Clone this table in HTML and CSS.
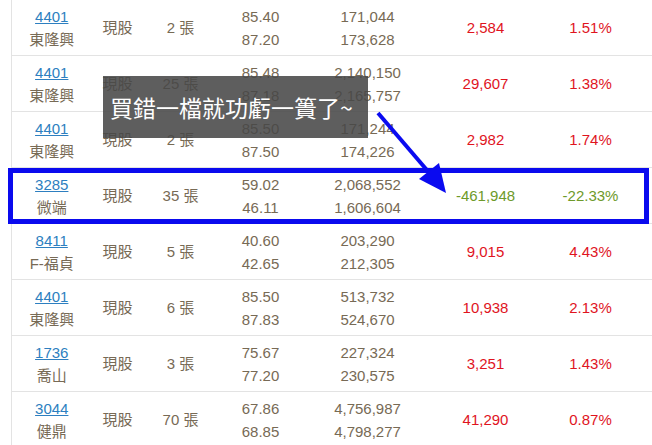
FILE: index.html
```html
<!DOCTYPE html>
<html lang="zh-Hant">
<head>
<meta charset="utf-8">
<link rel="stylesheet" href="styles.css">
</head>
<body>
<div class="page">
<table class="trades">
<colgroup>
<col class="c1"><col class="c2"><col class="c3"><col class="c4"><col class="c5"><col class="c6"><col class="c7"><col>
</colgroup>
<tbody>
<tr><td><a href="#">4401</a><br>東隆興</td><td>現股</td><td>2 張</td><td>85.40<br>87.20</td><td>171,044<br>173,628</td><td class="up">2,584</td><td class="up">1.51%</td><td></td></tr>
<tr><td><a href="#">4401</a><br>東隆興</td><td>現股</td><td>25 張</td><td>85.48<br>87.18</td><td>2,140,150<br>2,165,757</td><td class="up">29,607</td><td class="up">1.38%</td><td></td></tr>
<tr><td><a href="#">4401</a><br>東隆興</td><td>現股</td><td>2 張</td><td>85.50<br>87.50</td><td>171,244<br>174,226</td><td class="up">2,982</td><td class="up">1.74%</td><td></td></tr>
<tr><td><a href="#">3285</a><br>微端</td><td>現股</td><td>35 張</td><td>59.02<br>46.11</td><td>2,068,552<br>1,606,604</td><td class="down">-461,948</td><td class="down">-22.33%</td><td></td></tr>
<tr><td><a href="#">8411</a><br>F-福貞</td><td>現股</td><td>5 張</td><td>40.60<br>42.65</td><td>203,290<br>212,305</td><td class="up">9,015</td><td class="up">4.43%</td><td></td></tr>
<tr><td><a href="#">4401</a><br>東隆興</td><td>現股</td><td>6 張</td><td>85.50<br>87.83</td><td>513,732<br>524,670</td><td class="up">10,938</td><td class="up">2.13%</td><td></td></tr>
<tr><td><a href="#">1736</a><br>喬山</td><td>現股</td><td>3 張</td><td>75.67<br>77.20</td><td>227,324<br>230,575</td><td class="up">3,251</td><td class="up">1.43%</td><td></td></tr>
<tr><td><a href="#">3044</a><br>健鼎</td><td>現股</td><td>70 張</td><td>67.86<br>68.85</td><td>4,756,987<br>4,798,277</td><td class="up">41,290</td><td class="up">0.87%</td><td></td></tr>
</tbody>
</table>
<div class="highlight"></div>
<div class="caption">買錯一檔就功虧一簣了~</div>
<svg class="arrow" width="652" height="445" viewBox="0 0 652 445">
<line x1="378" y1="113" x2="432" y2="176" stroke="#0a0af0" stroke-width="4"/>
<polygon points="446,193 419,179 439,163" fill="#0a0af0"/>
</svg>
</div>
</body>
</html>
```
FILE: styles.css
```css
html, body {
  margin: 0;
  padding: 0;
  background: #fff;
  overflow: hidden;
}
.page {
  position: relative;
  width: 652px;
  height: 445px;
  overflow: hidden;
  font-family: "Liberation Sans", "Noto Sans CJK TC", Arial, sans-serif;
  font-size: 15px;
  color: #776a55;
}
.trades {
  margin-left: 11px;
  width: 700px;
  table-layout: fixed;
  border-collapse: collapse;
  border-left: 1px solid #e3e3e3;
}
.c1 { width: 80px; }
.c2 { width: 52px; }
.c3 { width: 74px; }
.c4 { width: 86px; }
.c5 { width: 128px; }
.c6 { width: 108px; }
.c7 { width: 102px; }
.trades td {
  height: 55px;
  padding: 0;
  text-align: center;
  vertical-align: middle;
  line-height: 23px;
  border-bottom: 1px solid #e3e3e3;
  white-space: nowrap;
}
.trades a {
  color: #2d7fc0;
  text-decoration: underline;
}
.up { color: #e0141e; }
.down { color: #6e9a2a; }
.highlight {
  position: absolute;
  left: 8px;
  top: 168px;
  width: 631px;
  height: 46px;
  border: 5px solid #0a0aee;
}
.caption {
  position: absolute;
  left: 103px;
  top: 76px;
  width: 265px;
  height: 62px;
  box-sizing: border-box;
  padding-left: 7px;
  background: rgba(72, 72, 72, 0.88);
  color: #fff;
  font-family: "Noto Sans CJK TC", sans-serif;
  font-size: 23px;
  line-height: 62px;
  white-space: nowrap;
}
.arrow {
  position: absolute;
  left: 0;
  top: 0;
}
```
